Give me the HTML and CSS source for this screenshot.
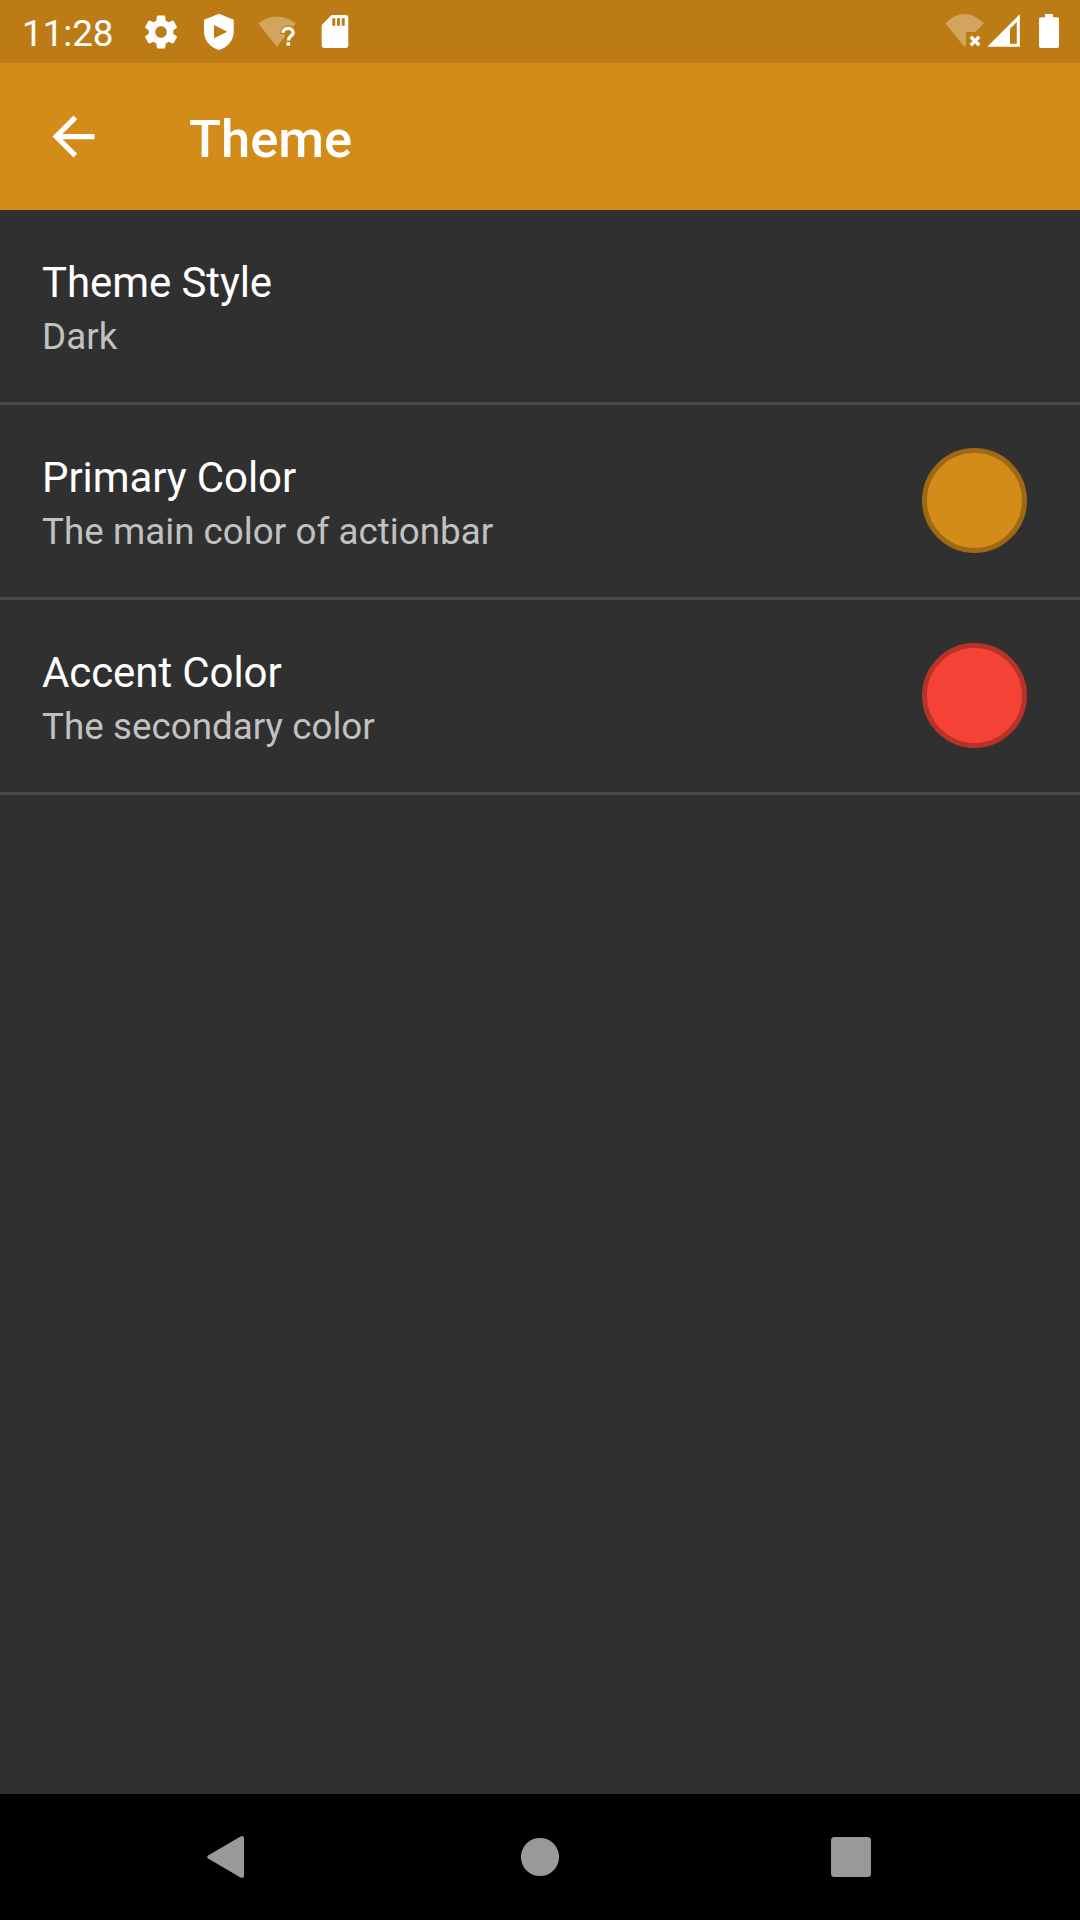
FILE: index.html
```html
<!DOCTYPE html>
<html lang="en">
<head>
<meta charset="utf-8">
<title>Theme</title>
<link rel="stylesheet" href="styles.css">
</head>
<body>
<div class="screen">
  <div class="status-bar">
    <span class="clock">11:28</span>
    <div class="notifications">
      <svg class="status-icon" viewBox="0 0 24 24"><path transform="translate(.2 .2) scale(.985)" d="M19.43 12.98c.04-.32.07-.64.07-.98s-.03-.66-.07-.98l2.11-1.65c.19-.15.24-.42.12-.64l-2-3.46c-.12-.22-.39-.3-.61-.22l-2.49 1c-.52-.4-1.08-.73-1.69-.98l-.38-2.65C14.46 2.18 14.25 2 14 2h-4c-.25 0-.46.18-.49.42l-.38 2.65c-.61.25-1.17.59-1.69.98l-2.49-1c-.23-.09-.49 0-.61.22l-2 3.46c-.13.22-.07.49.12.64l2.11 1.65c-.04.32-.07.65-.07.98s.03.66.07.98l-2.11 1.65c-.19.15-.24.42-.12.64l2 3.46c.12.22.39.3.61.22l2.49-1c.52.4 1.08.73 1.69.98l.38 2.65c.03.24.24.42.49.42h4c.25 0 .46-.18.49-.42l.38-2.65c.61-.25 1.17-.59 1.69-.98l2.49 1c.23.09.49 0 .61-.22l2-3.46c.12-.22.07-.49-.12-.64l-2.11-1.65zM12 15.5c-1.93 0-3.5-1.57-3.5-3.5s1.57-3.5 3.5-3.5 3.5 1.57 3.5 3.5-1.57 3.5-3.5 3.5z"/></svg>
      <svg class="status-icon" viewBox="0 0 40 40"><path fill-rule="evenodd" d="M20 1.7L34.7 7.8V19.5C34.7 28 29 35.5 20 38C11 35.5 5 28 5 19.5V7.8ZM15 13V26.3L28.3 19.7Z"/></svg>
      <svg class="status-icon" viewBox="0 0 40 40"><path class="faint" d="M1.2 11.3Q19.8-2.2 38.8 11.3L36 15Q32.5 12.8 28.5 14Q24 15.5 23.3 22H28L27.5 25L19.8 34.7Z"/><path class="mark" d="M26.1 20.8C26.1 14.9 36.1 14.9 36.1 20.8C36.1 24 31.3 24 31.3 28.6"/><rect x="29.5" y="30.2" width="3.6" height="3.4"/></svg>
      <svg class="status-icon" viewBox="0 0 40 40"><path fill-rule="evenodd" d="M16.7 3H30.5Q33.3 3 33.3 6V33Q33.3 36 30.5 36H9.5Q6.7 36 6.7 33V13ZM17.3 6.3V13.7H20.3V6.3ZM22 6.3V13.7H25V6.3ZM26.7 6.3V13.7H29.7V6.3Z"/></svg>
    </div>
    <div class="system">
      <svg class="status-icon" viewBox="0 0 40 40"><path class="faint" d="M1.2 11.3Q20.3-7.2 40 11.3L31.5 20H22V32.5L20.3 34.7Z"/><path class="cross" d="M26.8 24.8L35.2 33.2M35.2 24.8L26.8 33.2"/></svg>
      <svg class="status-icon" viewBox="0 0 40 40"><path fill-rule="evenodd" d="M3.3 34.8L35.8 2.3V34.8ZM26 16.8V31.8H32.8V10Z"/></svg>
      <svg class="status-icon battery" viewBox="0 0 40 40"><path d="M16 2H24V5.3H28Q30 5.3 30 7.3V34Q30 36 28 36H12Q10 36 10 34V7.3Q10 5.3 12 5.3H16Z"/></svg>
    </div>
  </div>
  <header class="app-bar">
    <svg class="back" viewBox="0 0 24 24"><path d="M20 11H7.83l5.59-5.59L12 4l-8 8 8 8 1.41-1.41L7.83 13H20v-2z"/></svg>
    <h1 class="title">Theme</h1>
  </header>
  <main class="settings">
    <section class="row">
      <div class="labels">
        <div class="name">Theme Style</div>
        <div class="summary">Dark</div>
      </div>
    </section>
    <section class="row">
      <div class="labels">
        <div class="name">Primary Color</div>
        <div class="summary">The main color of actionbar</div>
      </div>
      <div class="swatch primary"></div>
    </section>
    <section class="row">
      <div class="labels">
        <div class="name">Accent Color</div>
        <div class="summary">The secondary color</div>
      </div>
      <div class="swatch accent"></div>
    </section>
  </main>
  <nav class="nav-bar">
    <svg class="nav-icon" viewBox="0 0 44 44"><path d="M4.500 20.200L36.500 1.400Q40 0 40 3.500V40.500Q40 44 36.500 42.600L4.500 23.800Q1.800 22 4.500 20.200Z"/></svg>
    <svg class="nav-icon home" viewBox="0 0 44 44"><circle cx="22" cy="22" r="19.1"/></svg>
    <svg class="nav-icon" viewBox="0 0 44 44"><rect x="2" y="2" width="40" height="40" rx="3.5"/></svg>
  </nav>
</div>
</body>
</html>
```
FILE: styles.css
```css
* {
  box-sizing: border-box;
}

body {
  margin: 0;
  font-family: Roboto, sans-serif;
  color: #fff;
  background: #303030;
}

svg {
  display: block;
  flex: none;
  fill: #fff;
}

.screen {
  width: 1080px;
  height: 1920px;
  display: flex;
  flex-direction: column;
  background: #303030;
}

.status-bar {
  height: 63px;
  display: flex;
  background: #bd7b16;
}

.clock {
  width: 141px;
  padding: 12px 0 0 22px;
  font-size: 36.75px;
  line-height: 43px;
}

.notifications {
  display: flex;
  gap: 18px;
  padding-top: 12px;
}

.system {
  display: flex;
  margin-left: auto;
  padding: 12px 11px 0 0;
}

.status-icon {
  width: 40px;
  height: 40px;
}

.battery {
  margin-left: 5px;
}

.faint {
  fill: #d3a45d;
}

.mark,
.cross {
  fill: none;
  stroke: #fff;
  stroke-width: 3.4;
}

.app-bar {
  height: 147px;
  display: flex;
  align-items: center;
  padding-left: 42px;
  background: #d38b19;
}

.back {
  width: 63px;
  height: 63px;
}

.title {
  margin: 5px 0 0 84px;
  font-size: 52.5px;
  font-weight: 500;
  line-height: 62px;
}

.settings {
  flex: 1;
}

.row {
  height: 195px;
  display: flex;
  justify-content: space-between;
  padding: 43px 53px 0 42px;
  border-bottom: 3px solid #4a4a4a;
}

.labels {
  padding-top: 5px;
}

.name {
  font-size: 42px;
  line-height: 49px;
  letter-spacing: -0.09px;
}

.summary {
  margin-top: 8px;
  font-size: 36.75px;
  line-height: 43px;
  letter-spacing: 0.03px;
  color: #c1c1c1;
}

.swatch {
  width: 105px;
  height: 105px;
  border-radius: 50%;
  border: 5px solid;
}

.primary {
  background: #d38b19;
  border-color: #9f6813;
}

.accent {
  background: #f44336;
  border-color: #b73229;
}

.nav-bar {
  height: 126px;
  display: flex;
  justify-content: space-between;
  align-items: center;
  padding: 0 207px 0 204px;
  background: #000;
}

.nav-icon {
  width: 44px;
  height: 44px;
  fill: #999;
}

.home {
  margin-left: 3px;
}
```
